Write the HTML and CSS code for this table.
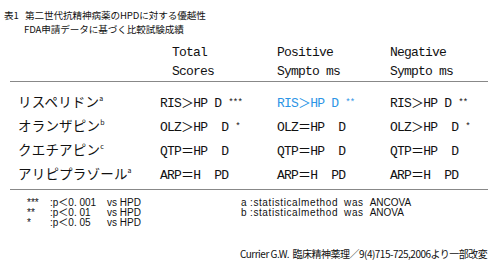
FILE: index.html
```html
<!DOCTYPE html>
<html lang="ja">
<head>
<meta charset="utf-8">
<link rel="stylesheet" href="styles.css">
</head>
<body>
<div class="page">
  <div class="title">
    <div class="t1"><span class="tno">表1</span>第二世代抗精神病薬のHPDに対する優越性</div>
    <div class="t2">FDA申請データに基づく比較試験成績</div>
  </div>
  <div class="head">
    <div></div>
    <div class="h h1">Total<br>Scores</div>
    <div class="h">Positive<br>Sympto ms</div>
    <div class="h">Negative<br>Sympto ms</div>
  </div>
  <div class="body">
    <div class="row">
      <div class="name">リスペリドン<sup>a</sup></div>
      <div class="v">RIS＞HP D <span class="st">***</span></div>
      <div class="v blue">RIS＞HP D <span class="st">**</span></div>
      <div class="v">RIS＞HP D <span class="st">**</span></div>
    </div>
    <div class="row">
      <div class="name">オランザピン<sup>b</sup></div>
      <div class="v">OLZ＞HP  D <span class="st">*</span></div>
      <div class="v">OLZ＝HP  D</div>
      <div class="v">OLZ＞HP  D <span class="st">*</span></div>
    </div>
    <div class="row">
      <div class="name">クエチアピン<sup>c</sup></div>
      <div class="v">QTP＝HP  D</div>
      <div class="v">QTP＝HP  D</div>
      <div class="v">QTP＝HP  D</div>
    </div>
    <div class="row">
      <div class="name">アリピプラゾール<sup>a</sup></div>
      <div class="v">ARP＝H  PD</div>
      <div class="v">ARP＝H  PD</div>
      <div class="v">ARP＝H  PD</div>
    </div>
  </div>
  <div class="notes">
    <div class="pnotes">
      <span>***</span><span>:p＜0. 001</span><span>vs HPD</span>
      <span>**</span><span>:p＜0. 01</span><span>vs HPD</span>
      <span>*</span><span>:p＜0. 05</span><span>vs HPD</span>
    </div>
    <div class="mnotes">
      <div class="mline"><span class="k">a</span><span>:statistical</span><span>method</span><span class="w">was</span><span class="r">ANCOVA</span></div>
      <div class="mline"><span class="k">b</span><span>:statistical</span><span>method</span><span class="w">was</span><span class="r">ANOVA</span></div>
    </div>
  </div>
  <div class="cite">Currier G.W.&nbsp; 臨床精神薬理／9(4)715-725,2006より一部改変</div>
</div>
</body>
</html>
```
FILE: styles.css
```css
html, body {
  margin: 0;
  padding: 0;
  background: #fff;
}
.page {
  width: 500px;
  height: 264px;
  color: #111;
  font-family: "Noto Sans CJK JP", "DejaVu Sans", sans-serif;
}
.title {
  padding: 8px 0 0 4px;
  font-size: 9.6px;
  line-height: 14px;
  letter-spacing: -0.1px;
}
.tno {
  display: inline-block;
  width: 21px;
  letter-spacing: 0;
}
.t2 {
  padding-left: 20px;
}
.head, .row {
  display: grid;
  grid-template-columns: 150px 117px 113px 1fr;
}
.head {
  margin: 0 12px 0 10px;
  padding-top: 7px;
  font-family: "Liberation Mono", "Noto Sans CJK JP", monospace;
  font-size: 13px;
  letter-spacing: -0.8px;
  line-height: 19px;
  border-bottom: 1px solid #888;
}
.h1 {
  padding-left: 12px;
}
.body {
  margin: 0 12px 0 10px;
  padding: 7px 0 4px;
  border-bottom: 1px solid #888;
}
.row {
  height: 24px;
  align-items: center;
}
.name {
  padding-left: 8px;
  font-size: 13.5px;
  letter-spacing: 0.2px;
}
.name sup {
  font-size: 7px;
  vertical-align: 6px;
  line-height: 0;
}
.v {
  font-family: "Liberation Mono", "Noto Sans CJK JP", monospace;
  font-size: 13px;
  letter-spacing: -0.8px;
  white-space: pre;
}
.st {
  font-size: 9px;
  vertical-align: 2px;
}
.blue {
  color: #2b95e6;
}
.notes {
  display: flex;
  padding: 8px 0 0 27px;
  font-size: 10px;
  line-height: 10px;
  font-family: "Liberation Sans", "Noto Sans CJK JP", sans-serif;
}
.pnotes {
  display: grid;
  grid-template-columns: 23px 57px auto;
  width: 214px;
}
.mnotes {
  display: flex;
  flex-direction: column;
  letter-spacing: 0.6px;
}
.mline {
  display: flex;
  white-space: nowrap;
}
.k {
  width: 9px;
}
.w {
  margin-left: 6px;
}
.r {
  margin-left: 6px;
  letter-spacing: 0;
}
.cite {
  padding: 18px 0 0 240px;
  font-size: 10px;
  letter-spacing: -0.5px;
  white-space: nowrap;
}
```
